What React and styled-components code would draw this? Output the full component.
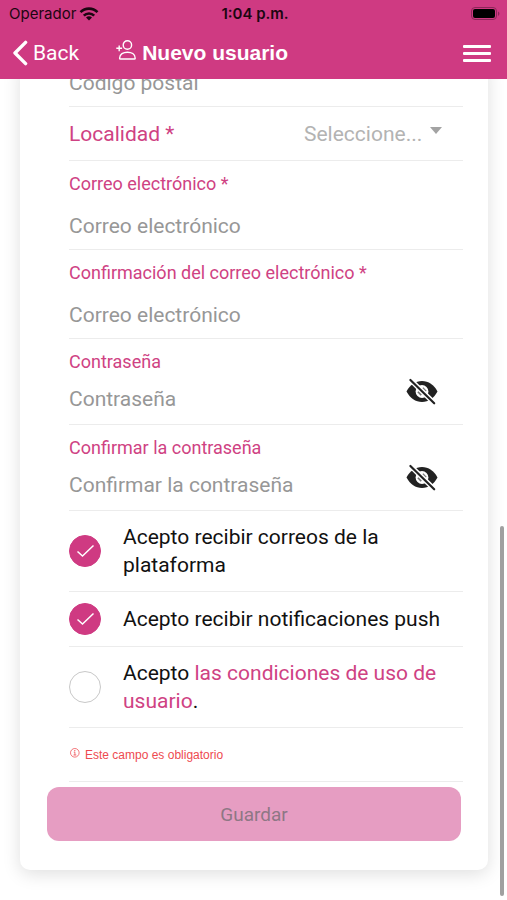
import React, { useState } from "react";
import styled, { createGlobalStyle } from "styled-components";
import { IoEye, IoInformationCircleOutline } from "react-icons/io5";

function App() {
  return (
    <>
      <GlobalStyle />
      <Page>
        <Header />
        <Content>
          <UserForm />
        </Content>
        <ScrollThumb />
      </Page>
    </>
  );
}

function Header() {
  return (
    <TopBar>
      <StatusBar>
        <Carrier>
          Operador
          <svg width="20" height="14" viewBox="0 0 20 14" aria-hidden="true">
            <g fill="none" stroke="#1c0611" strokeWidth="2.6">
              <path d="M1.5 5.2a12 12 0 0 1 17 0" />
              <path d="M4.8 8.6a7.4 7.4 0 0 1 10.4 0" />
            </g>
            <path d="M10 13.6 7 10.6a4.3 4.3 0 0 1 6 0z" fill="#1c0611" />
          </svg>
        </Carrier>
        <Clock>1:04 p.m.</Clock>
        <Battery width="30" height="14" viewBox="0 0 30 14" aria-hidden="true">
          <rect
            x="0.5"
            y="0.5"
            width="25"
            height="12"
            rx="3.5"
            fill="none"
            stroke="#8d2659"
          />
          <rect x="2" y="2" width="22" height="9" rx="2" fill="#000" />
          <path d="M27 4.5a2.4 2.4 0 0 1 0 4.4z" fill="#8d2659" />
        </Battery>
      </StatusBar>
      <Toolbar>
        <BackButton type="button">
          <svg width="16" height="26" viewBox="0 0 16 26" aria-hidden="true">
            <path
              d="M13.6 2.4 3 13l10.6 10.6"
              fill="none"
              stroke="#fff"
              strokeWidth="3.4"
              strokeLinecap="round"
              strokeLinejoin="round"
            />
          </svg>
          Back
        </BackButton>
        <Title>
          <svg viewBox="0 0 20 20" aria-hidden="true">
            <circle cx="11.4" cy="5" r="4.2" />
            <path d="M3.6 18.2c0-4.2 3.8-6 7.8-6s7.8 1.8 7.8 6q0 .8-.8.8h-14q-.8 0-.8-.8z" />
            <path d="M3.2 5.4v5.8M.3 8.3h5.8" />
          </svg>
          Nuevo usuario
        </Title>
        <MenuButton type="button" aria-label="Menú">
          <span />
          <span />
          <span />
        </MenuButton>
      </Toolbar>
    </TopBar>
  );
}

function EyeOff() {
  return (
    <svg width="34" height="34" viewBox="0 0 34 34" aria-hidden="true">
      <path
        d="M1.5 17.5C5 10.8 10.6 7 17 7s12 3.8 15.5 10.5C29 24.2 23.4 28 17 28S5 24.2 1.5 17.5z"
        fill="#222"
      />
      <circle cx="17" cy="17.5" r="6.4" fill="#fff" />
      <path d="m17.6 14 3.4 3.4M13 17.6l3.4 3.4" stroke="#777" strokeWidth="2" />
      <path d="m3 3.5 29 28.4" stroke="#fff" strokeWidth="5" />
      <path
        d="m5.4 6 23.8 23.3"
        stroke="#222"
        strokeWidth="2.2"
        strokeLinecap="round"
      />
    </svg>
  );
}

function PasswordField({ id, label }) {
  const [isVisible, setIsVisible] = useState(false);

  return (
    <Field $compact>
      <label htmlFor={id}>{label}</label>
      <PasswordRow>
        <TextInput
          id={id}
          type={isVisible ? "text" : "password"}
          placeholder={label}
        />
        <EyeButton
          type="button"
          aria-label="Mostrar contraseña"
          onClick={() => setIsVisible(!isVisible)}
        >
          {isVisible ? <IoEye /> : <EyeOff />}
        </EyeButton>
      </PasswordRow>
    </Field>
  );
}

function CheckItem({ id, checked, children }) {
  return (
    <CheckRow>
      <CheckBox>
        <input id={id} type="checkbox" defaultChecked={checked} />
        <svg width="32" height="32" viewBox="0 0 32 32" aria-hidden="true">
          <path d="m8.5 16.5 5 4.5 11-10.5" />
        </svg>
      </CheckBox>
      <label htmlFor={id}>{children}</label>
    </CheckRow>
  );
}

function UserForm() {
  return (
    <Card onSubmit={(e) => e.preventDefault()}>
      <Row>
        <TextInput placeholder="Código postal" aria-label="Código postal" />
      </Row>
      <SelectRow>
        <label htmlFor="localidad">Localidad *</label>
        <SelectBox>
          <select id="localidad">
            <option>Seleccione...</option>
          </select>
          <svg width="12" height="7" viewBox="0 0 12 7" aria-hidden="true">
            <path d="M0 0h12L6 7z" fill="#a3a3a3" />
          </svg>
        </SelectBox>
      </SelectRow>
      <Field>
        <label htmlFor="correo">Correo electrónico *</label>
        <TextInput id="correo" type="email" placeholder="Correo electrónico" />
      </Field>
      <Field>
        <label htmlFor="correo2">Confirmación del correo electrónico *</label>
        <TextInput id="correo2" type="email" placeholder="Correo electrónico" />
      </Field>
      <PasswordField id="pass" label="Contraseña" />
      <PasswordField id="pass2" label="Confirmar la contraseña" />
      <CheckItem id="correos" checked>
        Acepto recibir correos de la plataforma
      </CheckItem>
      <CheckItem id="push" checked>
        Acepto recibir notificaciones push
      </CheckItem>
      <CheckItem id="condiciones">
        Acepto <a href="#condiciones">las condiciones de uso de usuario</a>.
      </CheckItem>
      <ErrorRow>
        <IoInformationCircleOutline />
        Este campo es obligatorio
      </ErrorRow>
      <SaveButton type="submit" disabled>
        Guardar
      </SaveButton>
    </Card>
  );
}

const GlobalStyle = createGlobalStyle`
  :root {
    --clr-primary: #cf3a82;
    --clr-label: #cf4283;
    --clr-line: #ececec;
    --clr-placeholder: #979797;
    --font-title: "Liberation Sans", Arial, sans-serif;
  }

  *,
  *::before,
  *::after {
    box-sizing: border-box;
  }

  body {
    margin: 0;
    background: #fff;
    color: #111;
    font-family: Roboto, Inter, sans-serif;
    font-size: 21px;
  }

  button,
  input,
  select {
    font: inherit;
    border: none;
    background: none;
    padding: 0;
    margin: 0;
  }

  a {
    color: var(--clr-label);
    text-decoration: none;
  }
`;

const Page = styled.div`
  position: relative;
  display: flex;
  flex-direction: column;
  height: 100vh;
`;

const TopBar = styled.header`
  flex-shrink: 0;
  background: var(--clr-primary);
  color: #fff;
`;

const StatusBar = styled.div`
  display: grid;
  grid-template-columns: 1fr auto 1fr;
  align-items: center;
  height: 27px;
  padding: 0 6px 0 9px;
  color: #1c0611;
  font-family: Inter, sans-serif;
  font-size: 15px;
`;

const Carrier = styled.span`
  display: flex;
  align-items: center;
  gap: 3px;
`;

const Clock = styled.span`
  font-weight: 600;
`;

const Battery = styled.svg`
  justify-self: end;
`;

const Toolbar = styled.div`
  display: flex;
  align-items: center;
  height: 52px;
  padding: 0 16px 0 12px;
`;

const BackButton = styled.button`
  display: flex;
  align-items: center;
  gap: 5px;
  color: #fff;
  cursor: pointer;
`;

const Title = styled.h1`
  flex: 1;
  display: flex;
  align-items: center;
  gap: 6px;
  margin: 0 0 0 37px;
  font-family: var(--font-title);
  font-size: 21px;
  font-weight: 700;

  svg {
    width: 20px;
    height: 20px;
    margin-bottom: 6px;
    fill: none;
    stroke: #fff;
    stroke-width: 1.4;
  }
`;

const MenuButton = styled.button`
  display: grid;
  gap: 4px;
  width: 28px;
  cursor: pointer;

  span {
    height: 3px;
    border-radius: 1px;
    background: #fff;
  }
`;

/* column-reverse keeps the end of the form in view */
const Content = styled.main`
  flex: 1;
  min-height: 0;
  display: flex;
  flex-direction: column-reverse;
  overflow-y: auto;
  scrollbar-width: none;
  padding: 0 19px 30px 20px;
`;

const ScrollThumb = styled.div`
  position: absolute;
  right: 3px;
  bottom: 4px;
  width: 4px;
  height: 45%;
  max-height: 370px;
  border-radius: 2px;
  background: #a0a0a0;
`;

const Card = styled.form`
  flex-shrink: 0;
  display: flex;
  flex-direction: column;
  padding-bottom: 29px;
  border-radius: 10px;
  background: #fff;
  box-shadow: 0 4px 18px rgba(0, 0, 0, 0.13);
`;

const Row = styled.div`
  margin: 0 25px 0 49px;
  border-bottom: 1px solid var(--clr-line);
`;

const TextInput = styled.input`
  display: block;
  width: 100%;
  min-width: 0;
  height: 46px;
  outline: none;

  &::placeholder {
    color: var(--clr-placeholder);
    opacity: 1;
  }
`;

const SelectRow = styled(Row)`
  display: flex;
  align-items: center;
  justify-content: space-between;
  height: 54px;

  label {
    color: var(--clr-label);
  }
`;

const SelectBox = styled.div`
  display: flex;
  align-items: center;
  gap: 7px;
  padding-right: 21px;

  select {
    appearance: none;
    color: #b3b3b3;
    outline: none;
  }

  svg {
    margin-bottom: 6px;
    pointer-events: none;
  }
`;

const Field = styled(Row)`
  display: flex;
  flex-direction: column;
  gap: ${(props) => (props.$compact ? "2px" : "9px")};
  padding-top: 13px;

  label {
    color: var(--clr-label);
    font-size: 18px;
    line-height: 20px;
  }
`;

const PasswordRow = styled.div`
  display: flex;
  align-items: flex-start;
  padding-right: 24px;

  input {
    height: 50px;
  }
`;

const EyeButton = styled.button`
  display: flex;
  color: #222;
  font-size: 34px;
  cursor: pointer;
`;

const CheckRow = styled(Row)`
  display: flex;
  align-items: center;
  gap: 22px;
  padding: 12px 0;
  line-height: 28px;

  label {
    flex: 1;
  }
`;

const CheckBox = styled.span`
  display: grid;
  margin: -1px 0;

  input,
  svg {
    grid-area: 1 / 1;
  }

  input {
    appearance: none;
    width: 32px;
    height: 32px;
    border: 1px solid #c8c8c8;
    border-radius: 50%;
  }

  input:checked {
    border-color: var(--clr-primary);
    background: var(--clr-primary);
  }

  svg {
    fill: none;
    stroke: #fff;
    stroke-width: 1.5;
    pointer-events: none;
    visibility: hidden;
  }

  input:checked + svg {
    visibility: visible;
  }
`;

const ErrorRow = styled(Row)`
  display: flex;
  align-items: center;
  gap: 4px;
  height: 54px;
  color: #ee4a4f;
  font-family: var(--font-title);
  font-size: 12px;

  svg {
    width: 12px;
    height: 12px;
    margin-bottom: 3px;
  }
`;

const SaveButton = styled.button`
  height: 54px;
  margin: 5px 27px 0;
  border-radius: 12px;
  background: #e69dc2;
  color: #8e7785;
  font-size: 19px;
`;

export default App;
